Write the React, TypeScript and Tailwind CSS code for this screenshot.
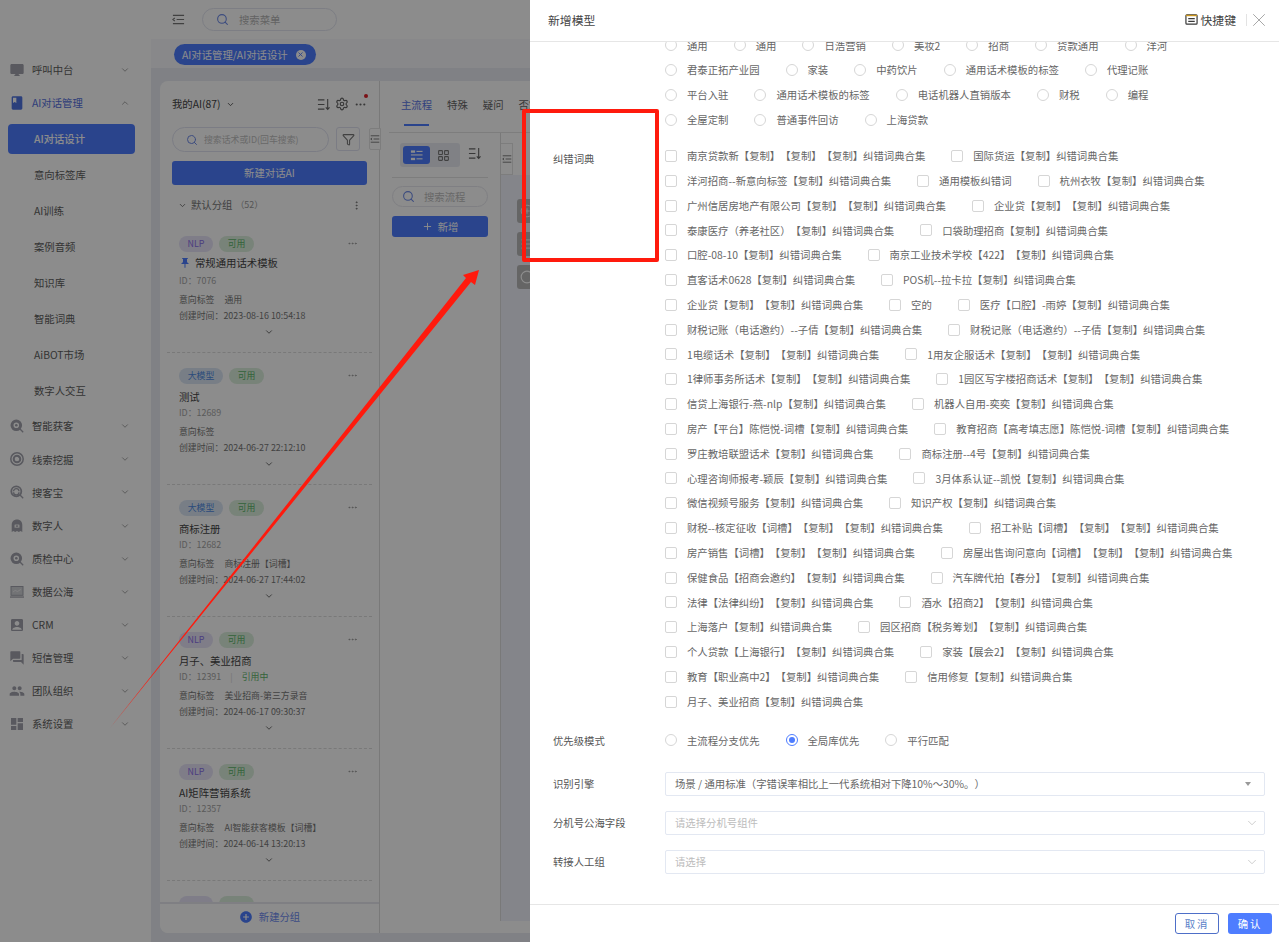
import React from 'react';
import { ChevronDown, ChevronUp, Search, Settings, MoreHorizontal, MoreVertical, Funnel, Plus, X, LayoutGrid, CirclePlus, Circle, AlignJustify } from 'lucide-react';
import { MdDesktopMac, MdBook, MdForum, MdPeople, MdDashboard, MdAccountBox, MdPushPin, MdAddCircle } from 'react-icons/md';

function SortIcon({ className = '' }: { className?: string }) {
  return (
    <svg viewBox="0 0 14 14" className={className} fill="none" stroke="currentColor" strokeWidth="1.2">
      <path d="M1 2h7M1 7h7M1 12h7M11.5 1v11M9.5 10l2 2.2 2-2.2" />
    </svg>
  );
}
function ListTabIcon({ className = '' }: { className?: string }) {
  return (
    <svg viewBox="0 0 14 14" className={className} fill="none" stroke="currentColor" strokeWidth="1.3">
      <path d="M1 2.5h12M5 7h8M1 11.5h12M3 5.5 1 7l2 1.5" />
    </svg>
  );
}
function TreeIcon({ className = '' }: { className?: string }) {
  return (
    <svg viewBox="0 0 14 14" className={className} fill="currentColor">
      <rect x="1" y="1.5" width="4.5" height="2.5" />
      <rect x="7" y="2" width="6.5" height="1.2" />
      <rect x="1" y="5.8" width="12.5" height="1.2" />
      <rect x="1" y="9.5" width="4.5" height="2.5" />
      <rect x="7" y="10" width="6.5" height="1.2" />
    </svg>
  );
}
function LensIcon({ kind, className = '' }: { kind: 'solid' | 'ring' | 'face'; className?: string }) {
  return (
    <svg viewBox="0 0 14 14" className={className} fill="none">
      {kind === 'solid' && (
        <>
          <circle cx="6.3" cy="6.3" r="4.3" stroke="currentColor" strokeWidth="3" />
          <circle cx="6.3" cy="6.3" r="1.3" fill="currentColor" />
          <path d="m10 10 3.2 3.2" stroke="currentColor" strokeWidth="1.3" />
        </>
      )}
      {kind === 'ring' && (
        <>
          <circle cx="7" cy="7" r="6.2" stroke="currentColor" strokeWidth="1.5" />
          <circle cx="7" cy="7" r="3.3" stroke="currentColor" strokeWidth="2" />
          <path d="M7 3.6 10 6" stroke="currentColor" strokeWidth="1.2" />
        </>
      )}
      {kind === 'face' && (
        <>
          <circle cx="6.3" cy="6.3" r="5" stroke="currentColor" strokeWidth="1.8" />
          <path d="M3.6 6.3a2.7 2.7 0 0 1 5.4 0M3.6 7.2a2.7 2.7 0 0 0 5.4 0" stroke="currentColor" strokeWidth="1.3" />
          <path d="m10 10 3.2 3.2" stroke="currentColor" strokeWidth="1.3" />
        </>
      )}
    </svg>
  );
}
function GhostIcon({ className = '' }: { className?: string }) {
  return (
    <svg viewBox="0 0 14 14" className={className} fill="currentColor">
      <path d="M7 .6c3.1 0 5.300 2.200 5.300 5.300V13l-1.700-.9-1.800.9L7 12.100l-1.800.9-1.800-.9-1.700.9V5.900C1.700 2.800 3.900.6 7 .6Z" />
      <rect x="4.500" y="5.400" width="5" height="3.400" rx=".6" fill="#f2f2f2" />
      <rect x="6.200" y="6.300" width="1.600" height="1.600" fill="currentColor" />
    </svg>
  );
}
function ChartIcon({ className = '' }: { className?: string }) {
  return (
    <svg viewBox="0 0 14 14" className={className} fill="none">
      <rect x="1" y="1.500" width="12" height="8.800" stroke="currentColor" strokeWidth="1" fill="currentColor" fillOpacity=".5" />
      <path d="m3 7 2.200-1.600L7.400 6.500 11 4.400" stroke="#f2f2f2" strokeWidth=".8" />
      <rect y="11.400" width="14" height="1.300" fill="currentColor" />
    </svg>
  );
}

type NavEntry = { label: string; icon: React.ReactNode };
const ic = 'w-[14px] h-[14px] text-[#a2a3ad]';
const big = 'w-[16px] h-[16px] -ml-[1px] text-[#a2a3ad]';
const topNav: NavEntry[] = [
  { label: '智能获客', icon: <LensIcon kind="solid" className={ic} /> },
  { label: '线索挖掘', icon: <LensIcon kind="ring" className={ic} /> },
  { label: '搜客宝', icon: <LensIcon kind="face" className={ic} /> },
  { label: '数字人', icon: <GhostIcon className={ic} /> },
  { label: '质检中心', icon: <LensIcon kind="solid" className={ic} /> },
  { label: '数据公海', icon: <ChartIcon className={ic} /> },
  { label: 'CRM', icon: <MdAccountBox className={big} /> },
  { label: '短信管理', icon: <MdForum className={big} /> },
  { label: '团队组织', icon: <MdPeople className={big} /> },
  { label: '系统设置', icon: <MdDashboard className={big} /> },
];
const subNav = ['意向标签库', 'AI训练', '案例音频', '知识库', '智能词典', 'AiBOT市场', '数字人交互'];

function NavRow({ icon, label, active, up }: { icon: React.ReactNode; label: string; active?: boolean; up?: boolean }) {
  return (
    <div className="h-[33.1px] flex items-center pl-[10px] pr-[21px]">
      <span className="w-[22px] flex justify-start">{icon}</span>
      <span className={`text-[10.36px] ${active ? 'text-[#5570dd]' : 'text-[#5e5e5e]'}`}>{label}</span>
      <span className="ml-auto text-[#a8a8a8]">
        {up ? <ChevronUp size={10} strokeWidth={2.4} /> : <ChevronDown size={10} strokeWidth={2.4} />}
      </span>
    </div>
  );
}

function Sidebar() {
  return (
    <aside className="w-[151px] shrink-0 bg-white pt-[53.5px]">
      <NavRow icon={<MdDesktopMac className={big} />} label="呼叫中台" />
      <NavRow icon={<MdBook className="w-[16px] h-[16px] -ml-[1px] text-[#4f73e0]" />} label="AI对话管理" active up />
      <div className="pt-[1px] pb-[1px]">
        <div className="h-[36px] flex items-center">
          <div className="mx-[8px] w-[127px] h-[30px] rounded-[4px] bg-[#4e7dff] text-white text-[10.36px] flex items-center pl-[26px] font-medium">
            AI对话设计
          </div>
        </div>
        {subNav.map((s) => (
          <div key={s} className="h-[36px] flex items-center pl-[34px] text-[10.36px] text-[#5e5e5e]">
            {s}
          </div>
        ))}
      </div>
      {topNav.map((n) => (
        <NavRow key={n.label} icon={n.icon} label={n.label} />
      ))}
    </aside>
  );
}

type CardData = {
  kind: 'NLP' | '大模型';
  title: string;
  id: string;
  tag?: string;
  time: string;
  pin?: boolean;
  ref?: boolean;
};
const cards: CardData[] = [
  { kind: 'NLP', title: '常规通用话术模板', id: '7076', tag: '通用', time: '2023-08-16 10:54:18', pin: true },
  { kind: '大模型', title: '测试', id: '12689', time: '2024-06-27 22:12:10' },
  { kind: '大模型', title: '商标注册', id: '12682', tag: '商标注册【词槽】', time: '2024-06-27 17:44:02' },
  { kind: 'NLP', title: '月子、美业招商', id: '12391', tag: '美业招商-第三方录音', time: '2024-06-17 09:30:37', ref: true },
  { kind: 'NLP', title: 'AI矩阵营销系统', id: '12357', tag: 'AI智能获客模板【词槽】', time: '2024-06-14 13:20:13' },
];

function Card({ c }: { c: CardData }) {
  return (
    <div className="h-[132px] shrink-0 pl-[12px] pr-[14px] pt-[15px] border-b border-dashed border-[#dcdcdc]">
      <div className="h-[16px] flex items-center gap-[6px]">
        <span
          className={`h-[16px] rounded-full flex items-center justify-center text-[8.9px] ${
            c.kind === 'NLP' ? 'w-[34px] bg-[#e7e3f8] text-[#8a6fe8]' : 'w-[44px] bg-[#dbe6f5] text-[#4f8ae0]'
          }`}
        >
          {c.kind}
        </span>
        <span className="w-[35px] h-[16px] rounded-full bg-[#dbefdc] text-[#5bb56a] flex items-center justify-center text-[8.9px]">
          可用
        </span>
        <MoreHorizontal size={11} className="ml-auto text-[#9a9a9a]" />
      </div>
      <div className={`${c.pin ? 'mt-[3px] mb-[2px]' : 'mt-[5px]'} h-[16px] flex items-center text-[10.36px] text-[#444]`}>
        {c.pin && <MdPushPin size={12} className="text-[#4e7dff] mr-[4px]" />}
        {c.title}
      </div>
      <div className="h-[16px] flex items-center text-[8.9px] text-[#a5a5a5]">
        ID：{c.id}
        {c.ref && (
          <>
            <span className="mx-[9px] text-[#d5d5d5]">|</span>
            <span className="text-[#5fb76c]">引用中</span>
          </>
        )}
      </div>
      <div className="mt-[3px] h-[16px] flex items-center text-[8.9px] text-[#777]">
        <span>意向标签</span>
        {c.tag && <span className="ml-[10px]">{c.tag}</span>}
      </div>
      <div className="h-[16px] flex items-center text-[8.9px] text-[#777]">创建时间：{c.time}</div>
      <div className="h-[16px] flex items-center justify-center text-[#555]">
        <ChevronDown size={10} strokeWidth={2} />
      </div>
    </div>
  );
}

function LeftPanel() {
  return (
    <section className="relative w-[220px] shrink-0 border-r border-[#dcdcdc] flex flex-col">
      <div className="px-[12px] pt-[14px]">
        <div className="relative h-[18px] flex items-center text-[10.36px] text-[#444]">
          我的AI(87)
          <ChevronDown size={9} strokeWidth={2.2} className="ml-[5px]" />
          <SortIcon className="w-[13px] h-[13px] ml-auto mr-[5px] text-[#666]" />
          <Settings size={14} className="text-[#666] mr-[5px]" />
          <MoreHorizontal size={13} className="text-[#666]" />
          <span className="absolute right-[-1px] top-[-1px] w-[4px] h-[4px] rounded-full bg-[#e0202a]" />
        </div>
        <div className="mt-[14px] flex gap-[7px]">
          <div className="w-[157px] h-[25px] rounded-full border border-[#e0e2f0] flex items-center pl-[13px] text-[8.9px] text-[#c0c0c0]">
            <Search size={12} className="text-[#6e8be8] mr-[6px]" />
            搜索话术或ID(回车搜索)
          </div>
          <div className="w-[24px] h-[24px] rounded-[3px] border border-[#e0e2f0] flex items-center justify-center">
            <Funnel size={13} className="text-[#777]" />
          </div>
        </div>
        <div className="mt-[9px] w-[195px] h-[24px] rounded-[3px] bg-[#4e7dff] text-white text-[10.36px] flex items-center justify-center">
          新建对话AI
        </div>
        <div className="mt-[10px] h-[20px] flex items-center text-[10.36px] text-[#777] pl-[6px] pr-[5px]">
          <ChevronDown size={9} strokeWidth={2.2} className="mr-[4px] text-[#666]" />
          默认分组
          <span className="ml-[3px] text-[8.9px] text-[#999]">（52）</span>
          <MoreVertical size={11} className="ml-auto text-[#777]" />
        </div>
      </div>
      <div className="mt-[5.7px] mx-[7px] flex-1 min-h-0 overflow-hidden flex flex-col">
        {cards.map((c, i) => (
          <Card key={i} c={c} />
        ))}
        <div className="shrink-0 pl-[12px] pt-[15px] flex gap-[6px]">
          <span className="w-[34px] h-[16px] rounded-full bg-[#e7e3f8]" />
          <span className="w-[35px] h-[16px] rounded-full bg-[#dbefdc]" />
        </div>
      </div>
      <div className="h-[31px] shrink-0 border-t-[2px] border-[#e8e8ee] pb-[3px] flex items-center justify-center text-[10.36px] text-[#6f8df0] rounded-bl-[8px] bg-white">
        <MdAddCircle size={14} className="text-[#4e7dff] mr-[6px]" />
        新建分组
      </div>
      <div className="absolute left-[209px] top-[47px] w-[12px] h-[22px] border border-[#e3e3e3] bg-white flex items-center justify-center rounded-l-[2px]">
        <ListTabIcon className="w-[10px] h-[10px] text-[#777]" />
      </div>
    </section>
  );
}

function MiddleArea() {
  return (
    <section className="flex-1 min-w-0 flex flex-col">
      <div className="h-[52px] shrink-0 border-b border-[#e4e4e4] ml-[9px] pl-[12px] flex gap-[15px] text-[10.36px] text-[#666]">
        <div className="relative h-full flex items-center pb-[4px] text-[#5a78e6]">
          主流程
          <span className="absolute left-[3px] right-[3px] bottom-[6px] h-[2px] bg-[#4e7dff]" />
        </div>
        <div className="h-full flex items-center pb-[4px]">特殊</div>
        <div className="h-full flex items-center pb-[4px]">疑问</div>
        <div className="h-full flex items-center pb-[4px]">否定</div>
      </div>
      <div className="flex-1 min-h-0 flex pb-[12px]">
        <div className="w-[121px] shrink-0 border-r border-[#dcdcdc] px-[12px]">
          <div className="mt-[10px] ml-[8px] w-[60px] h-[24px] rounded-[3px] bg-[#eaecf3] flex items-center pl-[3px] relative">
            <span className="w-[27px] h-[18px] rounded-[3px] bg-[#4e7dff] text-white flex items-center justify-center">
              <TreeIcon className="w-[13px] h-[13px]" />
            </span>
            <LayoutGrid size={13} className="ml-[7px] text-[#777]" />
            <SortIcon className="absolute left-[68px] top-[4px] w-[13px] h-[13px] text-[#666]" />
          </div>
          <div className="mt-[10px] border-t border-[#e4e4e4]" />
          <div className="mt-[8px] h-[21px] rounded-full border border-[#e8e8ee] flex items-center pl-[9px] text-[10.36px] text-[#bdbdbd]">
            <Search size={13} className="text-[#6e8be8] mr-[9px]" />
            搜索流程
          </div>
          <div className="mt-[9px] h-[21px] rounded-[3px] bg-[#4e7dff] text-white text-[10.36px] flex items-center justify-center">
            <Plus size={11} className="mr-[5px]" />
            新增
          </div>
        </div>
        <div className="flex-1 min-w-0 flex flex-col">
          <div className="h-[42px] shrink-0 pt-[10px]">
            <div className="w-[12px] h-[32px] border border-[#e3e3e3] border-l-0 flex items-center justify-center">
              <ListTabIcon className="w-[10px] h-[10px] text-[#777]" />
            </div>
          </div>
          <div className="flex-1 bg-[#f0f2fb] pt-[24px] pl-[16px] flex flex-col gap-[9px]">
            <div className="w-[30px] h-[24px] rounded-[3px] bg-[#b8b8b8] pl-[3px] flex items-center text-white">
              <CirclePlus size={14} strokeWidth={1.5} />
            </div>
            <div className="w-[30px] h-[24px] rounded-[3px] bg-[#b8b8b8] pl-[3px] flex items-center text-white">
              <AlignJustify size={14} strokeWidth={1.5} />
            </div>
            <div className="w-[30px] h-[24px] rounded-[3px] bg-[#b8b8b8] pl-[3px] flex items-center text-white">
              <Circle size={14} strokeWidth={2} />
            </div>
          </div>
        </div>
      </div>
    </section>
  );
}

function Radio({ checked }: { checked?: boolean }) {
  return checked ? (
    <span className="w-[12px] h-[12px] shrink-0 rounded-full border border-[#4e7dff] flex items-center justify-center">
      <span className="w-[6px] h-[6px] rounded-full bg-[#4e7dff]" />
    </span>
  ) : (
    <span className="w-[12px] h-[12px] shrink-0 rounded-full border border-[#d6d6d6]" />
  );
}

function OptRow({ items, type, checkedIndex }: { items: string[]; type: 'radio' | 'check'; checkedIndex?: number }) {
  return (
    <div className="h-[24.8px] flex items-center gap-[26px]">
      {items.map((t, i) => (
        <div key={i} className="flex items-center whitespace-nowrap">
          {type === 'radio' ? (
            <Radio checked={checkedIndex === i} />
          ) : (
            <span className="w-[12px] h-[12px] shrink-0 rounded-[2px] border border-[#d6d6d6]" />
          )}
          <span className="ml-[10px] text-[10.36px] text-[#666]">{t}</span>
        </div>
      ))}
    </div>
  );
}

const radioRows = [
  ['通用', '通用', '日浩营销', '美妆2', '招商', '贷款通用', '洋河'],
  ['君泰正拓产业园', '家装', '中药饮片', '通用话术模板的标签', '代理记账'],
  ['平台入驻', '通用话术模板的标签', '电话机器人直销版本', '财税', '编程'],
  ['全屋定制', '普通事件回访', '上海贷款'],
];
const J = '纠错词典合集';
const checkRows = [
  [`南京贷款新【复制】【复制】【复制】${J}`, `国际货运【复制】${J}`],
  [`洋河招商--新意向标签【复制】${J}`, '通用模板纠错词', `杭州衣牧【复制】${J}`],
  [`广州信居房地产有限公司【复制】【复制】${J}`, `企业贷【复制】【复制】${J}`],
  [`泰康医疗（养老社区）【复制】${J}`, `口袋助理招商【复制】${J}`],
  [`口腔-08-10【复制】${J}`, `南京工业技术学校【422】【复制】${J}`],
  [`直客话术0628【复制】${J}`, `POS机--拉卡拉【复制】${J}`],
  [`企业贷【复制】【复制】${J}`, '空的', `医疗【口腔】-雨婷【复制】${J}`],
  [`财税记账（电话邀约）--子倩【复制】${J}`, `财税记账（电话邀约）--子倩【复制】${J}`],
  [`1电缆话术【复制】【复制】${J}`, `1用友企服话术【复制】【复制】${J}`],
  [`1律师事务所话术【复制】【复制】${J}`, `1园区写字楼招商话术【复制】【复制】${J}`],
  [`信贷上海银行-燕-nlp【复制】${J}`, `机器人自用-奕奕【复制】${J}`],
  [`房产【平台】陈恺悦-词槽【复制】${J}`, `教育招商【高考填志愿】陈恺悦-词槽【复制】${J}`],
  [`罗庄教培联盟话术【复制】${J}`, `商标注册--4号【复制】${J}`],
  [`心理咨询师报考-颖辰【复制】${J}`, `3月体系认证--凯悦【复制】${J}`],
  [`微信视频号服务【复制】${J}`, `知识产权【复制】${J}`],
  [`财税--核定征收【词槽】【复制】【复制】${J}`, `招工补贴【词槽】【复制】【复制】${J}`],
  [`房产销售【词槽】【复制】【复制】${J}`, `房屋出售询问意向【词槽】【复制】【复制】${J}`],
  [`保健食品【招商会邀约】【复制】${J}`, `汽车牌代拍【春分】【复制】${J}`],
  [`法律【法律纠纷】【复制】${J}`, `酒水【招商2】【复制】${J}`],
  [`上海落户【复制】${J}`, `园区招商【税务筹划】【复制】${J}`],
  [`个人贷款【上海银行】【复制】${J}`, `家装【展会2】【复制】${J}`],
  [`教育【职业高中2】【复制】${J}`, `信用修复【复制】${J}`],
  [`月子、美业招商【复制】${J}`],
];

function FormLabel({ children }: { children: React.ReactNode }) {
  return <div className="w-[135px] shrink-0 pl-[23px] text-[10.36px] text-[#555]">{children}</div>;
}

function SelectRow({ label, value, placeholder, solid }: { label: string; value: string; placeholder?: boolean; solid?: boolean }) {
  return (
    <div className="flex items-center h-[24px]">
      <FormLabel>{label}</FormLabel>
      <div className="w-[600px] h-[24px] border border-[#e3e8f2] rounded-[2px] flex items-center pl-[9px] pr-[5px]">
        <span className={`text-[10.36px] ${placeholder ? 'text-[#bcbcbc]' : 'text-[#666]'}`}>{value}</span>
        {solid ? (
          <span className="ml-auto mr-[8px] w-0 h-0 border-x-[3px] border-x-transparent border-t-[4px] border-t-[#999]" />
        ) : (
          <ChevronDown size={14} strokeWidth={1} className="ml-auto text-[#aaa]" />
        )}
      </div>
    </div>
  );
}

function Drawer() {
  return (
    <div className="absolute right-0 top-0 w-[749px] h-[942px] bg-white flex flex-col">
      <header className="h-[42px] shrink-0 border-b border-[#e6e6e6] flex items-center pl-[18px] pr-[9px] pb-[1px]">
        <span className="text-[11.84px] text-[#444]">新增模型</span>
        <span className="ml-auto flex items-center text-[11.84px] text-[#444]">
          <svg viewBox="0 0 14 14" className="w-[13px] h-[13px] mr-[3px]" fill="none" strokeWidth="1.300">
            <rect x="1" y="2" width="12" height="10" rx="1" stroke="#3a3a3a" />
            <path d="M1 2.700h12" stroke="#c9951f" strokeWidth="1.500" />
            <path d="M3.500 6h7M3.500 9h7" stroke="#3a3a3a" />
          </svg>
          快捷键
        </span>
        <span className="ml-[10px] mr-[1px] w-px h-[12px] bg-[#e3e3e3]" />
        <X size={22} strokeWidth={0.7} className="text-[#777]" />
      </header>
      <div className="flex-1 min-h-0 overflow-hidden">
        <div className="-mt-[9px]">
          <div className="flex">
            <div className="w-[135px] shrink-0" />
            <div>
              {radioRows.map((r, i) => (
                <OptRow key={i} items={r} type="radio" />
              ))}
            </div>
          </div>
          <div className="mt-[11.4px] flex">
            <div className="w-[135px] shrink-0 pl-[23px] pt-[7px] text-[10.36px] text-[#555]">纠错词典</div>
            <div>
              {checkRows.map((r, i) => (
                <OptRow key={i} items={r} type="check" />
              ))}
            </div>
          </div>
          <div className="mt-[14px] flex items-center">
            <FormLabel>优先级模式</FormLabel>
            <OptRow items={['主流程分支优先', '全局库优先', '平行匹配']} type="radio" checkedIndex={1} />
          </div>
          <div className="mt-[19.2px] flex flex-col gap-[15px]">
            <SelectRow label="识别引擎" value="场景 / 通用标准（字错误率相比上一代系统相对下降10%～30%。）" solid />
            <SelectRow label="分机号公海字段" value="请选择分机号组件" placeholder />
            <SelectRow label="转接人工组" value="请选择" placeholder />
          </div>
        </div>
      </div>
      <footer className="h-[38px] shrink-0 border-t border-[#e6e6e6] flex items-start justify-end pt-[8px] pr-[7px] gap-[9px]">
        <div className="w-[44px] h-[21px] rounded-[3px] border border-[#4e6fc8] text-[#5a7fc8] text-[10.36px] flex items-center justify-center tracking-[2px]">
          取消
        </div>
        <div className="w-[44px] h-[21px] rounded-[3px] bg-[#4e7dff] text-white text-[10.36px] flex items-center justify-center tracking-[2px]">
          确认
        </div>
      </footer>
    </div>
  );
}

export default function App() {
  return (
    <div className="relative w-[1279px] h-[942px] overflow-hidden flex bg-[#e9ecf3] [font-family:'Noto_Sans_CJK_SC','Noto_Sans',sans-serif] [text-spacing-trim:space-all]">
      <Sidebar />
      <main className="flex-1 min-w-0 flex flex-col">
        <div className="h-[39px] shrink-0 bg-white flex items-center pl-[21px]">
          <ListTabIcon className="w-[13px] h-[13px] text-[#777]" />
          <div className="ml-[17px] w-[135px] h-[23px] rounded-full border border-[#e3e5f0] flex items-center pl-[13px] text-[10.36px] text-[#b5b5b5]">
            <Search size={13} className="text-[#6e8be8] mr-[10px]" />
            搜索菜单
          </div>
        </div>
        <div className="h-[29px] shrink-0 bg-[#f7f8fb] pl-[23px] pt-[5px]">
          <div className="w-[142px] h-[21px] rounded-full bg-[#4e7dff] text-white text-[10.36px] flex items-center pl-[8px]">
            AI对话管理/AI对话设计
            <span className="ml-[8px] w-[10px] h-[10px] rounded-full bg-white flex items-center justify-center">
              <X size={7} strokeWidth={3} className="text-[#4e7dff]" />
            </span>
          </div>
        </div>
        <div className="flex-1 min-h-0 pt-[13px] pl-[9px] pb-[9px]">
          <div className="h-full bg-white rounded-l-[8px] flex overflow-hidden">
            <LeftPanel />
            <MiddleArea />
          </div>
        </div>
      </main>
      <div className="absolute inset-0 bg-black/45" />
      <Drawer />
      <div className="absolute left-[522px] top-[109px] w-[137px] h-[153px] border-[4px] border-[#ff1a0d] rounded-[2px]" />
      <svg className="absolute left-0 top-0 w-[1279px] h-[942px] pointer-events-none" viewBox="0 0 1279 942">
        <polygon points="110,728 466,278 463,275 479,270 475,285 471,282" fill="#ff1a0d" />
      </svg>
    </div>
  );
}
